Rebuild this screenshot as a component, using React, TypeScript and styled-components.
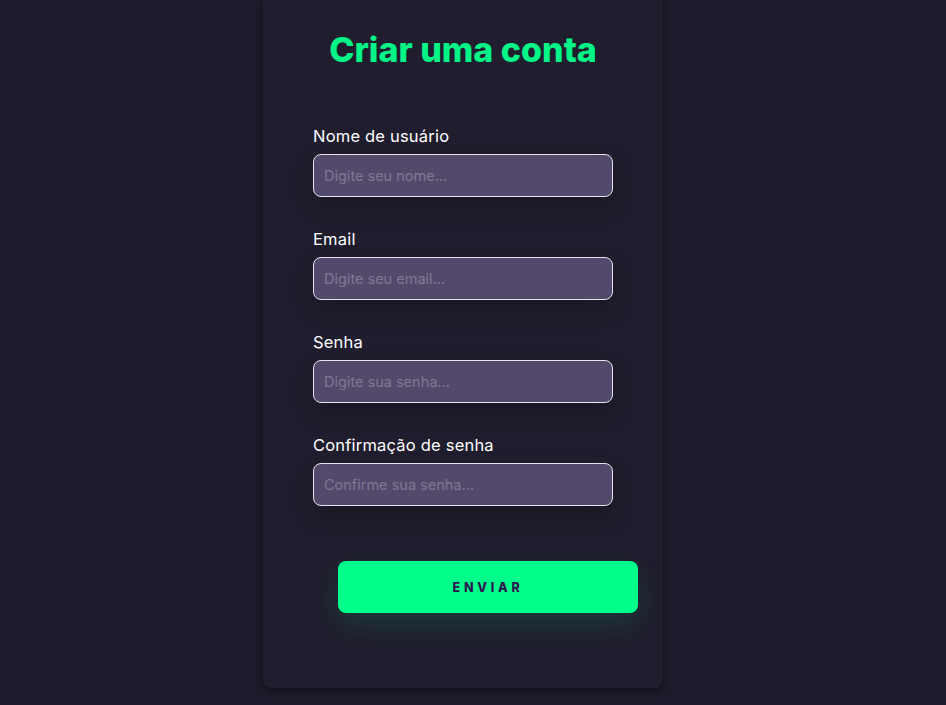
import * as React from 'react'
import styled, { createGlobalStyle } from 'styled-components'

const GlobalStyle = createGlobalStyle`
  html, body {
    margin: 0;
    padding: 0;
    background: #1e1b2c;
    font-family: 'Inter', 'Liberation Sans', sans-serif;
    overflow: hidden;
  }
`

const Page = styled.main`
  display: flex;
  justify-content: center;
  height: 705px;
  padding-right: 20px;
`

const Card = styled.form`
  box-sizing: border-box;
  width: 400px;
  height: 694px;
  margin-top: -6px;
  padding: 36px 50px 0;
  background: #201d2e;
  border-radius: 8px;
  box-shadow: 0 3px 8px rgba(0, 0, 0, 0.5);
  display: flex;
  flex-direction: column;
`

const Title = styled.h1`
  margin: 0 0 56px;
  text-align: center;
  color: #00f587;
  font-size: 34px;
  font-weight: 800;
  letter-spacing: 0;
  line-height: 40px;
`

const Field = styled.label`
  display: flex;
  flex-direction: column;
  gap: 8px;
  margin-bottom: 32px;
`

const LabelText = styled.span`
  color: #ffffff;
  font-size: 16.5px;
  letter-spacing: 0.2px;
  line-height: 20px;
`

const Input = styled.input`
  box-sizing: border-box;
  width: 300px;
  height: 43px;
  padding: 0 10px;
  border: 1px solid #e6e2ef;
  border-radius: 8px;
  background: #534a6b;
  color: #ffffff;
  font-family: inherit;
  font-size: 14.5px;
  outline: none;
  box-shadow: 0 10px 24px rgba(0, 0, 0, 0.22);

  &::placeholder {
    color: #7f7792;
  }
`

const Submit = styled.button`
  margin: 23px 0 0 25px;
  width: 300px;
  height: 52px;
  border: none;
  border-radius: 8px;
  background: #00ff8a;
  color: #2b1650;
  font-family: inherit;
  font-size: 12.5px;
  font-weight: 800;
  letter-spacing: 3.8px;
  cursor: pointer;
  box-shadow: 0 12px 30px rgba(0, 255, 138, 0.12);
`

const fields = [
  { label: 'Nome de usuário', placeholder: 'Digite seu nome...', type: 'text' },
  { label: 'Email', placeholder: 'Digite seu email...', type: 'email' },
  { label: 'Senha', placeholder: 'Digite sua senha...', type: 'password' },
  { label: 'Confirmação de senha', placeholder: 'Confirme sua senha...', type: 'password' },
]

export default function App() {
  return (
    <>
      <GlobalStyle />
      <Page>
        <Card onSubmit={(e) => e.preventDefault()}>
          <Title>Criar uma conta</Title>
          {fields.map((f) => (
            <Field key={f.label}>
              <LabelText>{f.label}</LabelText>
              <Input type={f.type} placeholder={f.placeholder} />
            </Field>
          ))}
          <Submit type="submit">ENVIAR</Submit>
        </Card>
      </Page>
    </>
  )
}
